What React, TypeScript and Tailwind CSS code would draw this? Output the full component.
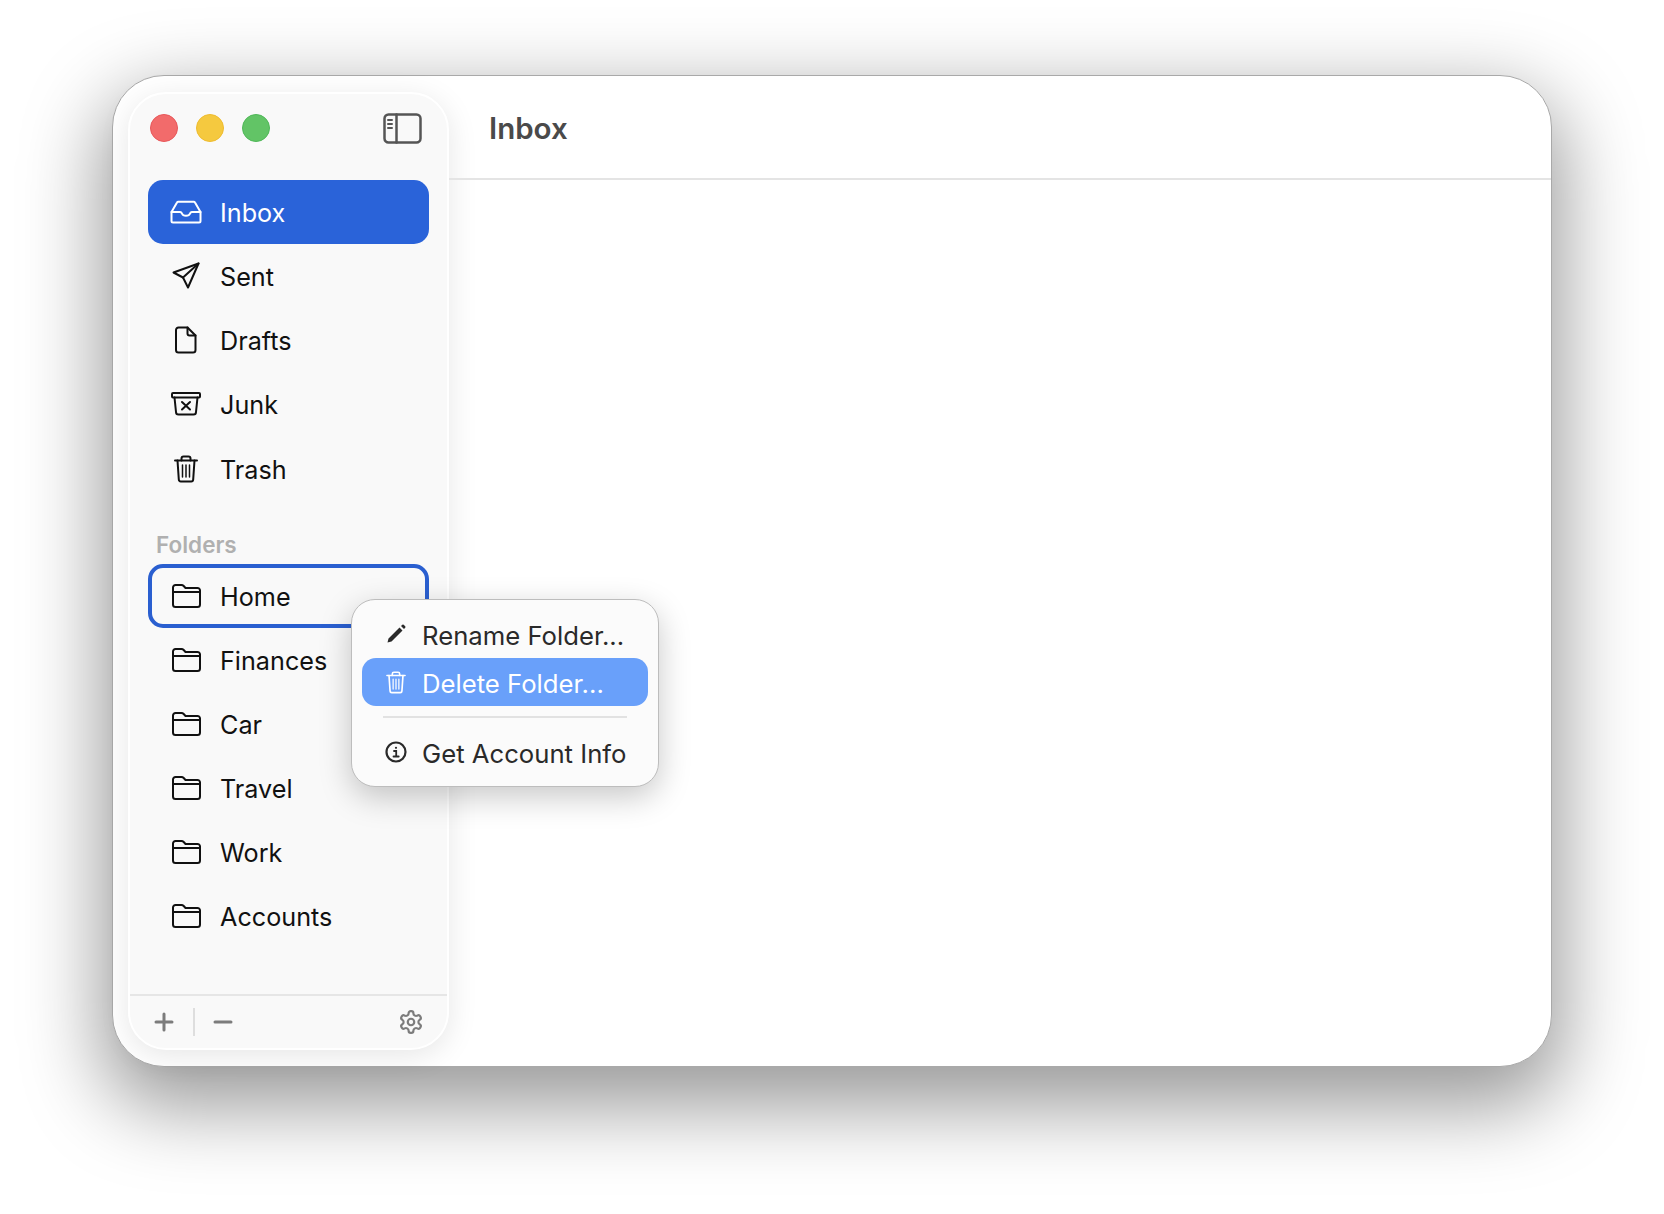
import React from "react";

const S = { fill: "none", stroke: "currentColor", strokeWidth: 2, strokeLinecap: "round" as const, strokeLinejoin: "round" as const };

const Inbox = () => (
  <svg width="32" height="24" viewBox="0 0 32 24" {...S}>
    <path d="M1.500 12 7 2.500a1.500 1.500 0 0 1 1.300-.8h15.400a1.500 1.500 0 0 1 1.300.8L30.500 12v9a1.500 1.500 0 0 1-1.500 1.500H3A1.500 1.500 0 0 1 1.500 21z" />
    <path d="M1.500 12h8.700c1 0 1.300.6 1.700 1.500.6 1.500 1.800 2.300 4.100 2.300s3.500-.8 4.100-2.300c.4-.9.700-1.500 1.700-1.500h8.700" />
  </svg>
);
const Sent = () => (
  <svg width="28" height="28" viewBox="0 0 28 28" {...S}>
    <path d="M26.500 1.500 1.500 10.500l9.500 5 5 10z" />
    <path d="M26.500 1.500 11 15.500" />
  </svg>
);
const Draft = () => (
  <svg width="22" height="28" viewBox="0 0 22 28" {...S}>
    <path d="M3.500 1.500h9L20.500 9.500V24a2.500 2.500 0 0 1-2.500 2.500H3.500A2.500 2.500 0 0 1 1 24V4a2.500 2.500 0 0 1 2.500-2.500z" />
    <path d="M12.500 1.500V7.500a2 2 0 0 0 2 2h6" />
  </svg>
);
const Junk = () => (
  <svg width="30" height="24" viewBox="0 0 30 24" {...S}>
    <rect x="1" y="1" width="28" height="4.500" rx="1" />
    <path d="M3.500 5.500 5 20a2.500 2.500 0 0 0 2.500 2.500h15A2.500 2.500 0 0 0 25 20l1.500-14.500" />
    <path d="m11 10 8 7.500M19 10l-8 7.500" />
  </svg>
);
const Trash = ({ w = 24, h = 28 }: { w?: number; h?: number }) => (
  <svg width={w} height={h} viewBox="0 0 24 28" {...S}>
    <path d="M1 5.500h22" />
    <path d="M7.500 5.500V3.500a2 2 0 0 1 2-2h5a2 2 0 0 1 2 2v2" />
    <path d="m3.500 5.500 1.300 19a2 2 0 0 0 2 1.900h10.400a2 2 0 0 0 2-1.900l1.300-19" />
    <path d="M8.500 10v12M12 10v12M15.500 10v12" strokeWidth={1.500} />
  </svg>
);
const Folder = () => (
  <svg className="ml-[2px]" width="29" height="24" viewBox="0 0 29 24" {...S} strokeWidth={2}>
    <path d="M1 7V3.500A2.500 2.500 0 0 1 3.500 1h6c1 0 1.500.3 2.200 1l1.800 2h11.500A2.500 2.500 0 0 1 28 6.500V20.500a2.500 2.500 0 0 1-2.500 2.500h-22A2.500 2.500 0 0 1 1 20.500z" />
    <path d="M1 8h27" />
  </svg>
);

const Row = ({ icon, label, active, ring }: { icon: React.ReactNode; label: string; active?: boolean; ring?: boolean }) => (
  <div
    className={
      "flex h-16 shrink-0 items-center rounded-[15px] " +
      (active ? "bg-[#2a63d9] text-white " : "text-[#111] ") +
      (ring ? "border-[4px] border-[#2a5fd0] " : "")
    }
  >
    <div className={"flex w-[72px] shrink-0 items-center justify-center pl-[3px] " + (ring ? "-ml-[4px]" : "")}>{icon}</div>
    <span className="pt-[4px] text-[25.200px] font-[430] leading-none">{label}</span>
  </div>
);

const MenuItem = ({ icon, label, active }: { icon: React.ReactNode; label: string; active?: boolean }) => (
  <div className={"flex h-12 items-center rounded-[14px] " + (active ? "bg-[#69a0fa] text-white" : "text-[#2a2a2a]")}>
    <div className="flex w-[60px] shrink-0 items-center justify-center pl-[7px]">{icon}</div>
    <span className="pt-[4px] text-[25.700px] font-[430] leading-none">{label}</span>
  </div>
);

export default function App() {
  return (
    <div className="h-[1214px] w-[1664px] bg-white pl-[112px] pt-[75px] font-['Inter','Liberation_Sans',sans-serif]">
      <div className="relative flex h-[992px] w-[1440px] rounded-[52px] border border-[#a9a9a9] bg-white shadow-[0_30px_80px_10px_rgba(0,0,0,0.40)]">
        <aside className="m-[16px] ml-[15px] mr-0 flex w-[321px] shrink-0 flex-col rounded-[38px] border-2 border-white bg-[#f9f9f9] shadow-[0_6px_30px_rgba(0,0,0,0.10)]">
          <div className="flex h-[86px] shrink-0 items-center justify-between pb-[18px] pl-[20px] pr-[25px]">
            <div className="flex gap-[18px]">
              <div className="h-[28px] w-[28px] rounded-full border border-[#e8575a] bg-[#f26b6b]" />
              <div className="h-[28px] w-[28px] rounded-full border border-[#efbc2f] bg-[#f5c93f]" />
              <div className="h-[28px] w-[28px] rounded-full border border-[#4fb858] bg-[#62c466]" />
            </div>
            <svg width="39" height="31" viewBox="0 0 39 31" fill="none" stroke="#555" strokeWidth="2.500" strokeLinecap="round">
              <rect x="1.500" y="1.500" width="36" height="28" rx="4" />
              <path d="M13.500 1.500v28" />
              <path d="M5 7h4M5 11h4M5 15h4" strokeWidth="2" />
            </svg>
          </div>
          <nav className="flex flex-col px-[18px]">
            <Row icon={<Inbox />} label="Inbox" active />
            <Row icon={<Sent />} label="Sent" />
            <Row icon={<Draft />} label="Drafts" />
            <Row icon={<Junk />} label="Junk" />
            <div className="mt-[1px]">
              <Row icon={<Trash />} label="Trash" />
            </div>
          </nav>
          <div className="mt-[28px] flex h-[32px] items-center pl-[26px] text-[22.500px] font-semibold leading-none text-[#b0b0b0]">Folders</div>
          <nav className="mt-[3px] flex flex-col px-[18px]">
            <Row icon={<Folder />} label="Home" ring />
            <Row icon={<Folder />} label="Finances" />
            <Row icon={<Folder />} label="Car" />
            <Row icon={<Folder />} label="Travel" />
            <Row icon={<Folder />} label="Work" />
            <Row icon={<Folder />} label="Accounts" />
          </nav>
          <div className="mt-auto flex h-[54px] shrink-0 items-center border-t-2 border-[#e6e6e6] pl-[24px] pr-[23px] text-[#7c7c7c]">
            <svg width="20" height="20" viewBox="0 0 20 20" fill="none" stroke="currentColor" strokeWidth="3" strokeLinecap="round">
              <path d="M10 2v16M2 10h16" />
            </svg>
            <div className="ml-[19px] h-[28px] w-[2px] bg-[#dedede]" />
            <svg className="ml-[18px]" width="20" height="4" viewBox="0 0 20 4" fill="none" stroke="currentColor" strokeWidth="3" strokeLinecap="round">
              <path d="M2 2h16" />
            </svg>
            <svg className="ml-auto" width="26" height="26" viewBox="0 0 24 24" fill="none" stroke="currentColor" strokeWidth="2" strokeLinecap="round" strokeLinejoin="round">
              <path d="M12.220 2h-.440a2 2 0 0 0-2 2v.180a2 2 0 0 1-1 1.730l-.430.250a2 2 0 0 1-2 0l-.150-.080a2 2 0 0 0-2.730.730l-.220.380a2 2 0 0 0 .730 2.730l.150.100a2 2 0 0 1 1 1.720v.510a2 2 0 0 1-1 1.740l-.150.090a2 2 0 0 0-.730 2.730l.220.380a2 2 0 0 0 2.730.730l.150-.080a2 2 0 0 1 2 0l.430.250a2 2 0 0 1 1 1.730V20a2 2 0 0 0 2 2h.440a2 2 0 0 0 2-2v-.180a2 2 0 0 1 1-1.730l.430-.250a2 2 0 0 1 2 0l.150.080a2 2 0 0 0 2.730-.730l.220-.390a2 2 0 0 0-.730-2.730l-.150-.080a2 2 0 0 1-1-1.740v-.500a2 2 0 0 1 1-1.740l.150-.090a2 2 0 0 0 .730-2.730l-.220-.380a2 2 0 0 0-2.730-.730l-.150.080a2 2 0 0 1-2 0l-.430-.250a2 2 0 0 1-1-1.730V4a2 2 0 0 0-2-2z" />
              <circle cx="12" cy="12" r="3" />
            </svg>
          </div>
        </aside>
        <main className="flex min-w-0 flex-1 flex-col">
          <header className="flex h-[104px] shrink-0 items-center border-b-2 border-[#e4e4e4] pl-[40px] pt-[3px]">
            <h1 className="text-[29.500px] font-semibold leading-none text-[#4a4a4a]">Inbox</h1>
          </header>
        </main>

        <div className="absolute left-[238px] top-[523px] w-[308px] rounded-[24px] border border-[#bdbdbd] bg-[#fbfbfb] p-[10px] shadow-[0_10px_32px_rgba(0,0,0,0.22)]">
          <MenuItem
            label="Rename Folder..."
            icon={
              <svg width="20" height="20" viewBox="0 0 20 20" fill="#2a2a2a">
                <path d="M1.500 18.500l1-4L13.500 3.500l3 3L5.500 17.500zM15 2l1.300-1.200a1 1 0 0 1 1.400 0l1.500 1.500a1 1 0 0 1 0 1.400L18 5z" />
              </svg>
            }
          />
          <MenuItem label="Delete Folder..." active icon={<Trash w={20} h={23} />} />
          <div className="mx-[21px] my-[10px] h-[2px] bg-[#e2e2e2]" />
          <MenuItem
            label="Get Account Info"
            icon={
              <svg width="22" height="22" viewBox="0 0 22 22" fill="none" stroke="currentColor" strokeWidth="2.200" strokeLinecap="round">
                <circle cx="11" cy="11" r="9.500" />
                <path d="M9 10h2.200v5.500M8.500 15.500h5.200" strokeWidth="1.800" />
                <circle cx="11" cy="6.800" r="1.100" fill="currentColor" stroke="none" />
              </svg>
            }
          />
        </div>
      </div>
    </div>
  );
}
